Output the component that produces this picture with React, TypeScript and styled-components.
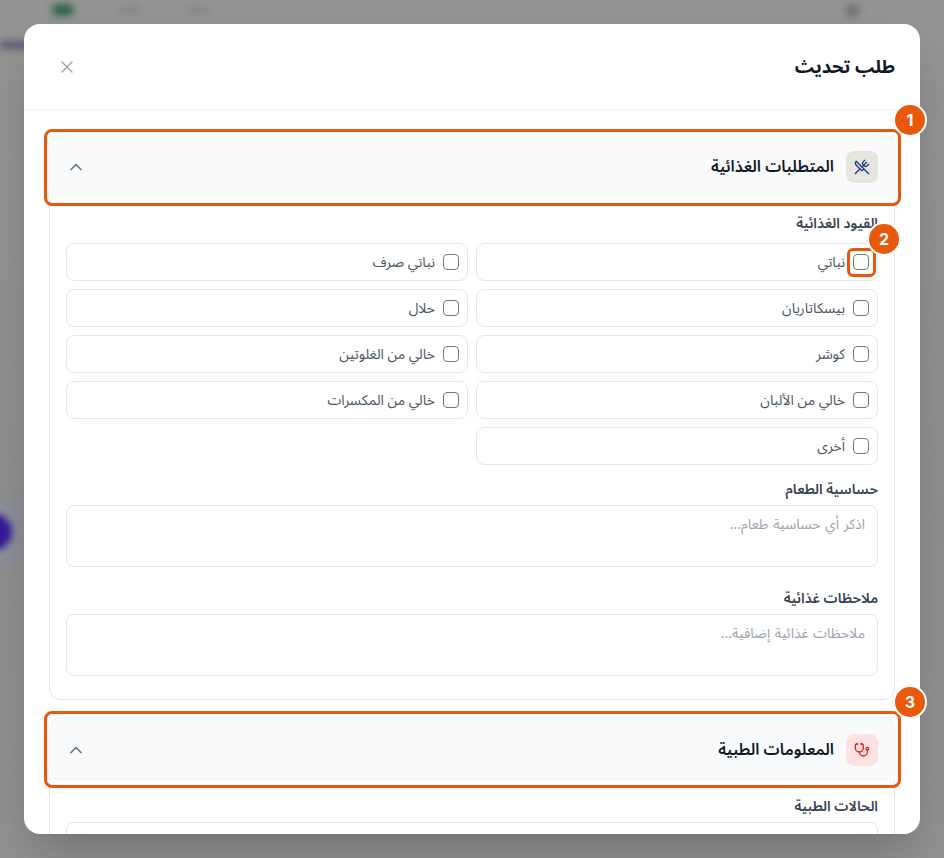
import React from "react";
import styled, { createGlobalStyle } from "styled-components";
import { ChevronUp, Stethoscope, UtensilsCrossed, X } from "lucide-react";

const GlobalStyle = createGlobalStyle`
  html, body {
    margin: 0;
    padding: 0;
    height: 100%;
    overflow: hidden;
    background: #929292;
  }
  * {
    box-sizing: border-box;
  }
`;

const Page = styled.div`
  position: relative;
  width: 944px;
  height: 858px;
  overflow: hidden;
  background: linear-gradient(180deg, #949492 0%, #8f8f8f 60%, #919191 100%);
  font-family: "Noto Sans Arabic", "Noto Sans", sans-serif;
`;

const BlurredApp = styled.div`
  display: flex;
  flex-direction: column;
  height: 100%;
  filter: blur(3.5px);
`;

const BlurredTopBar = styled.div`
  display: flex;
  align-items: center;
  height: 24px;
  padding: 0 84px 4px 52px;
  gap: 44px;
`;

const GreenPill = styled.div`
  width: 22px;
  height: 12px;
  border-radius: 6px;
  background: #2f6650;
`;

const GreyChip = styled.div`
  width: 24px;
  height: 8px;
  border-radius: 4px;
  background: #868889;
`;

const GreyDot = styled.div`
  width: 15px;
  height: 15px;
  margin-left: auto;
  border-radius: 50%;
  background: #757677;
`;

const BlurredStrip = styled.div`
  width: 30px;
  height: 8px;
  margin-top: 17px;
  background: #5a5d75;
`;

const BlurredPanel = styled.div`
  display: flex;
  align-items: center;
  width: 30px;
  height: 66px;
  margin-top: 450px;
  background: #8c8f99;
`;

const PurpleButton = styled.div`
  flex: none;
  width: 36px;
  height: 36px;
  margin-left: -24px;
  border-radius: 50%;
  background: #35199a;
`;

const Modal = styled.div`
  position: absolute;
  top: 24px;
  left: 24px;
  width: 896px;
  height: 810px;
  border-radius: 16px;
  box-shadow: 0 25px 50px -12px rgba(0, 0, 0, 0.25);
`;

const ModalClip = styled.div`
  display: flex;
  flex-direction: column;
  height: 100%;
  overflow: hidden;
  border-radius: 16px;
  background: #fff;
`;

const ModalHeader = styled.header`
  flex: none;
  display: flex;
  align-items: center;
  justify-content: space-between;
  height: 86px;
  padding: 0 25px 0 33px;
  border-bottom: 1px solid #f3f4f6;
  direction: rtl;
`;

const ModalTitle = styled.h2`
  margin: 0;
  font-size: 18px;
  line-height: 28px;
  font-weight: 700;
  color: #111827;
`;

const CloseButton = styled.button`
  display: flex;
  padding: 0;
  border: 0;
  background: none;
  color: #9ca3af;
  cursor: pointer;
`;

const ModalBody = styled.div`
  flex: 1;
  min-height: 0;
  display: flex;
  flex-direction: column;
  gap: 17px;
  padding: 24px 25px 0;
  direction: rtl;
`;

const Section = styled.section`
  flex: none;
`;

const SectionHeader = styled.div`
  display: flex;
  align-items: center;
  gap: 12px;
  height: 65px;
  padding: 0 16px;
  border: 1px solid #f3f4f6;
  border-bottom: 0;
  border-radius: 12px 12px 0 0;
  background: #f9fafb;
`;

const IconTile = styled.div<{ $bg: string; $fg: string }>`
  flex: none;
  display: flex;
  align-items: center;
  justify-content: center;
  width: 32px;
  height: 32px;
  border-radius: 8px;
  background: ${(p) => p.$bg};
  color: ${(p) => p.$fg};
`;

const SectionTitle = styled.h3`
  flex: 1;
  margin: 0;
  font-size: 16px;
  line-height: 24px;
  font-weight: 600;
  color: #111827;
`;

const Chevron = styled(ChevronUp)`
  flex: none;
  color: #6b7280;
`;

const SectionContent = styled.div`
  display: flex;
  flex-direction: column;
  padding: 15px 16px 23px;
  border: 1px solid #e5e7eb;
  border-top: 0;
  border-radius: 0 0 12px 12px;
`;

const FieldLabel = styled.label<{ $gap: number }>`
  display: block;
  margin-bottom: ${(p) => p.$gap}px;
  font-size: 14px;
  line-height: 20px;
  font-weight: 600;
  color: #374151;
`;

const OptionGrid = styled.div`
  display: grid;
  grid-template-columns: 1fr 1fr;
  gap: 8px;
  margin-bottom: 15px;
`;

const OptionRow = styled.label`
  display: flex;
  align-items: center;
  gap: 8px;
  height: 38px;
  padding: 0 8px;
  border: 1px solid #e5e7eb;
  border-radius: 8px;
  font-size: 14px;
  color: #4b5563;
`;

const Checkbox = styled.input.attrs({ type: "checkbox" })`
  appearance: none;
  flex: none;
  width: 16px;
  height: 16px;
  margin: 0;
  border: 1px solid #767676;
  border-radius: 4px;
  background: #fff;
`;

const NotesField = styled.textarea<{ $gap: number }>`
  display: block;
  width: 100%;
  height: 62px;
  margin-bottom: ${(p) => p.$gap}px;
  padding: 9px 12px;
  border: 1px solid #e5e7eb;
  border-radius: 8px;
  outline: 0;
  resize: none;
  font-family: inherit;
  font-size: 14px;
  line-height: 20px;
  word-spacing: 1px;
  direction: rtl;
  &::placeholder {
    color: #9ca3af;
  }
`;

const PartialField = styled.div`
  height: 62px;
  border: 1px solid #e5e7eb;
  border-radius: 8px;
`;

const Highlight = styled.div<{ $top: number; $left: number; $width: number; $height: number; $radius: number }>`
  position: absolute;
  top: ${(p) => p.$top}px;
  left: ${(p) => p.$left}px;
  width: ${(p) => p.$width}px;
  height: ${(p) => p.$height}px;
  border: 3px solid #e8590c;
  border-radius: ${(p) => p.$radius}px;
  pointer-events: none;
`;

const StepBadge = styled.div<{ $top: number; $left: number }>`
  position: absolute;
  top: ${(p) => p.$top}px;
  left: ${(p) => p.$left}px;
  display: flex;
  align-items: center;
  justify-content: center;
  width: 34px;
  height: 34px;
  border: 2px solid #fff;
  border-radius: 50%;
  background: #e8590c;
  color: #fff;
  font-family: "Inter", "Liberation Sans", sans-serif;
  font-size: 16px;
  font-weight: 700;
`;

const options = [
  "نباتي",
  "نباتي صرف",
  "بيسكاتاريان",
  "حلال",
  "كوشر",
  "خالي من الغلوتين",
  "خالي من الألبان",
  "خالي من المكسرات",
  "أخرى",
];

export default function App() {
  return (
    <Page>
      <GlobalStyle />
      <BlurredApp>
        <BlurredTopBar>
          <GreenPill />
          <GreyChip />
          <GreyChip />
          <GreyDot />
        </BlurredTopBar>
        <BlurredStrip />
        <BlurredPanel>
          <PurpleButton />
        </BlurredPanel>
      </BlurredApp>

      <Modal>
        <ModalClip>
          <ModalHeader>
            <ModalTitle>طلب تحديث</ModalTitle>
            <CloseButton aria-label="close">
              <X size={20} strokeWidth={1.6} />
            </CloseButton>
          </ModalHeader>
          <ModalBody>
            <Section>
              <SectionHeader>
                <IconTile $bg="#e7e5e0" $fg="#1e3a8a">
                  <UtensilsCrossed size={16} />
                </IconTile>
                <SectionTitle>المتطلبات الغذائية</SectionTitle>
                <Chevron size={20} />
              </SectionHeader>
              <SectionContent>
                <FieldLabel $gap={9}>القيود الغذائية</FieldLabel>
                <OptionGrid>
                  {options.map((option) => (
                    <OptionRow key={option}>
                      <Checkbox />
                      {option}
                    </OptionRow>
                  ))}
                </OptionGrid>
                <FieldLabel $gap={5}>حساسية الطعام</FieldLabel>
                <NotesField $gap={22} placeholder="اذكر أي حساسية طعام..." />
                <FieldLabel $gap={5}>ملاحظات غذائية</FieldLabel>
                <NotesField $gap={0} placeholder="ملاحظات غذائية إضافية..." />
              </SectionContent>
            </Section>
            <Section>
              <SectionHeader>
                <IconTile $bg="#fee2e2" $fg="#e02424">
                  <Stethoscope size={16} />
                </IconTile>
                <SectionTitle>المعلومات الطبية</SectionTitle>
                <Chevron size={20} />
              </SectionHeader>
              <SectionContent>
                <FieldLabel $gap={5}>الحالات الطبية</FieldLabel>
                <PartialField />
              </SectionContent>
            </Section>
          </ModalBody>
        </ModalClip>

        <Highlight $top={105} $left={20} $width={857} $height={77} $radius={8} />
        <Highlight $top={224} $left={823} $width={29} $height={29} $radius={6} />
        <Highlight $top={687} $left={20} $width={857} $height={77} $radius={8} />
        <StepBadge $top={79} $left={869}>1</StepBadge>
        <StepBadge $top={198} $left={843}>2</StepBadge>
        <StepBadge $top={661} $left={869}>3</StepBadge>
      </Modal>
    </Page>
  );
}
